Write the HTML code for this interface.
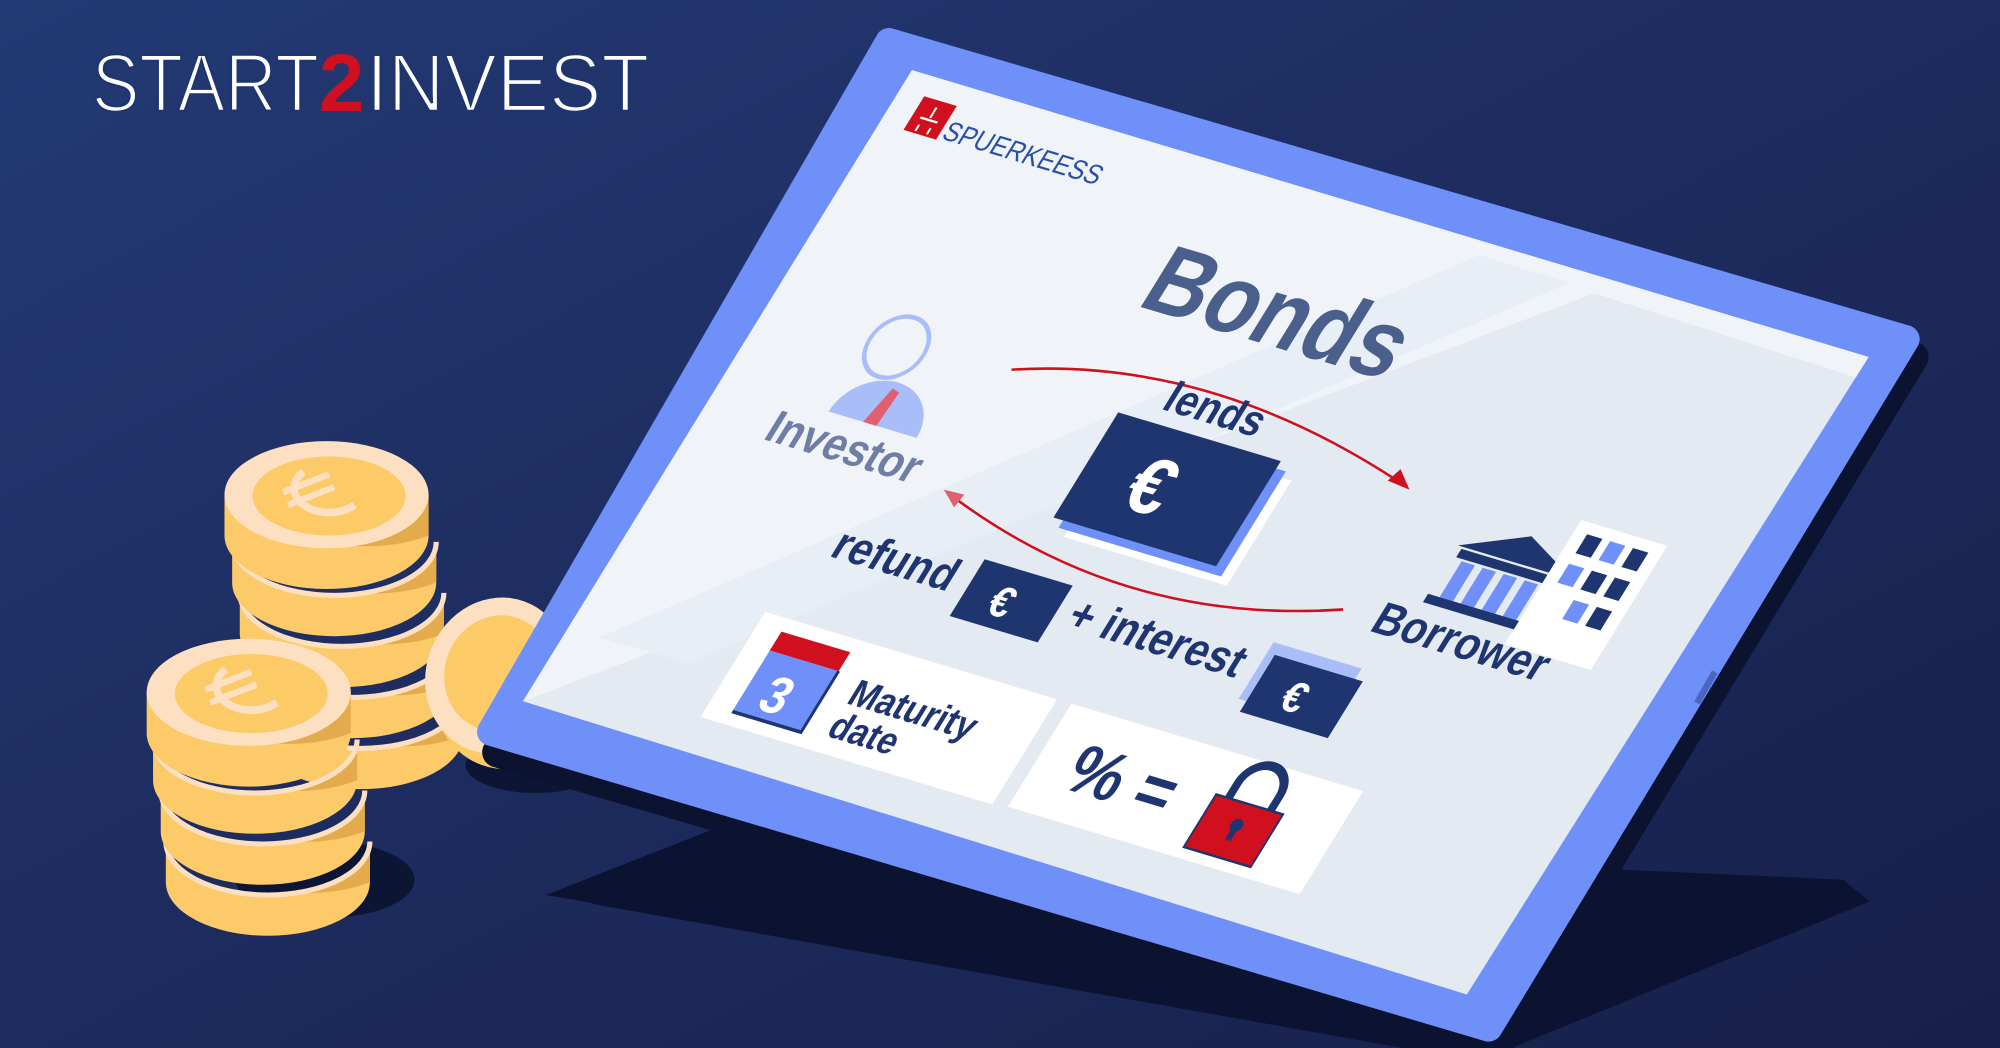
<!DOCTYPE html>
<html><head><meta charset="utf-8"><style>html,body{margin:0;padding:0;background:#1c2a5c;overflow:hidden}svg{display:block}</style></head>
<body>
<svg width="2000" height="1048" viewBox="0 0 1568 822" preserveAspectRatio="none" xmlns="http://www.w3.org/2000/svg">
<defs>
<linearGradient id="bg" x1="0" y1="0" x2="1" y2="1">
<stop offset="0" stop-color="#233a74"/><stop offset="0.5" stop-color="#1d2b5e"/><stop offset="1" stop-color="#17204a"/>
</linearGradient>
<g id="coin">
<path d="M-80 0 v32 a80 42 0 0 0 160 0 v-32z" fill="#fcca68"/>
<path d="M20 40 a80 42 0 0 0 60 -8 v-32 a80 42 0 0 1 -60 40z" fill="#e3ab4c"/>
<ellipse rx="80" ry="42" fill="#fde0c2"/>
<ellipse rx="60" ry="31" cx="2" cy="1" fill="#fccb68"/>
<path d="M-18 -18 a26 18 0 1 0 40 26" fill="none" stroke="#fde0c2" stroke-width="6"/>
<path d="M-34 -2 l36 -14 M-30 8 l36 -14" stroke="#fde0c2" stroke-width="5"/>
</g>
<g id="side">
<path d="M-80 0 v32 a80 42 0 0 0 160 0 v-32 a80 42 0 0 1 -160 0z" fill="#fcca68"/>
<path d="M20 40 a80 42 0 0 0 60 -8 v-32 a80 42 0 0 1 -60 40z" fill="#e3ab4c"/>
<path d="M-80 0 a80 42 0 0 0 160 0" fill="none" stroke="#fde0c2" stroke-width="4"/>
</g>
</defs>
<rect width="1568" height="822" fill="url(#bg)"/>

<text x="72" y="87" font-family="Liberation Sans, sans-serif" font-size="64" fill="#fff" textLength="178" lengthAdjust="spacingAndGlyphs" stroke="#1f3570" stroke-width="2">START</text>
<text x="250" y="87" font-family="Liberation Sans, sans-serif" font-size="64" font-weight="bold" fill="#d0101e">2</text>
<text x="287" y="87" font-family="Liberation Sans, sans-serif" font-size="64" fill="#fff" textLength="222" lengthAdjust="spacingAndGlyphs" stroke="#1f3570" stroke-width="2">INVEST</text>

<polygon points="428,702 560,650 1445,690 1466,707 1185,822 1140,822" fill="#0b1232"/>
<polygon points="430,700 1180,822 1100,822 470,710" fill="#0b1232"/>

<ellipse cx="255" cy="690" rx="70" ry="30" fill="#0d1535"/>
<ellipse cx="420" cy="600" rx="55" ry="22" fill="#0d1535"/>
<use href="#side" x="283" y="545"/>
<use href="#side" x="276" y="505"/>
<use href="#side" x="268" y="465"/>
<use href="#side" x="262" y="425"/>
<use href="#coin" x="256" y="388"/>
<g transform="translate(390,530) rotate(-70)">
<ellipse rx="62" ry="58" fill="#fcca68" cx="-8" cy="12"/>
<ellipse rx="62" ry="56" fill="#fde0c2"/>
<ellipse rx="46" ry="42" cx="2" fill="#fccb68"/>
</g>
<use href="#side" x="210" y="660"/>
<use href="#side" x="206" y="620"/>
<use href="#side" x="200" y="580"/>
<use href="#coin" x="195" y="543"/>

<polygon points="700,45 1500,280 1175,818 390,590" fill="#0b1330" stroke="#0b1330" stroke-width="24" stroke-linejoin="round"/>
<polygon points="697,33 1494,266 1167,806 385,574" fill="#6e90f8" stroke="#6e90f8" stroke-width="22" stroke-linejoin="round"/>
<rect x="1335" y="525" width="5" height="28" fill="#4b66c0" transform="rotate(30 1337 539)"/>
<polygon points="715,55 1465,280 1150,780 410,550" fill="#e4eaf2"/>
<polygon points="715,55 1465,280 1455,296 1250,230 410,550" fill="#f0f4f8"/>
<polygon points="1160,200 1230,222 540,520 470,500" fill="#e8eef5"/>

<path d="M793 290 Q950 280 1100 380" fill="none" stroke="#d0101e" stroke-width="2"/>
<polygon points="1105,384 1088,377 1098,368" fill="#d0101e"/>
<path d="M1053 478 Q880 490 745 388" fill="none" stroke="#d0101e" stroke-width="2"/>
<polygon points="740,384 756,388 748,398" fill="#e06070"/>

<g transform="matrix(0.75,0.225,-0.508,0.825,715,55)" font-family="Liberation Sans, sans-serif" font-weight="bold">
<rect x="25" y="18" width="34" height="32" fill="#d0101e"/>
<path d="M33 36 h18 M42 24 v10 M36 42 v6 M48 42 v6" stroke="#fff" stroke-width="2"/>
<text x="62" y="48" font-size="24" font-weight="normal" fill="#2a4fa8">SPUERKEESS</text>
<text x="325" y="135" font-size="84" fill="#4a5f8c">Bonds</text>
<circle cx="137" cy="226" r="28" fill="none" stroke="#a9bdf9" stroke-width="4"/>
<path d="M112 294 a46 40 0 0 1 92 0z" fill="#a9bdf9"/>
<polygon points="156,260 164,262 162,294 148,294" fill="#e06070"/>
<text x="68" y="332" font-size="40" fill="#6f7ea4">Investor</text>
<text x="403" y="212" font-size="38" fill="#1f3570">lends</text>
<rect x="388" y="238" width="170" height="100" fill="#fff"/>
<rect x="378" y="232" width="170" height="100" fill="#6e90f8"/>
<rect x="368" y="225" width="170" height="100" fill="#1f3570"/>
<text x="418" y="300" font-size="70" fill="#fff">€</text>
<text x="190" y="410" font-size="40" fill="#1f3570">refund</text>
<rect x="330" y="375" width="92" height="54" fill="#1f3570"/>
<text x="358" y="418" font-size="38" fill="#fff">€</text>
<text x="436" y="410" font-size="40" fill="#1f3570">+ interest</text>
<rect x="630" y="372" width="92" height="54" fill="#a9bdf9"/>
<rect x="638" y="382" width="92" height="54" fill="#1f3570"/>
<text x="668" y="424" font-size="38" fill="#fff">€</text>
<polygon points="740,250 800,225 860,250" fill="#1f3570"/>
<rect x="745" y="252" width="110" height="8" fill="#1f3570"/>
<rect x="752" y="262" width="14" height="34" fill="#6e90f8"/><rect x="774" y="262" width="14" height="34" fill="#6e90f8"/><rect x="796" y="262" width="14" height="34" fill="#6e90f8"/><rect x="818" y="262" width="14" height="34" fill="#6e90f8"/>
<rect x="740" y="296" width="120" height="8" fill="#1f3570"/>
<rect x="835" y="200" width="90" height="118" fill="#fff"/>
<g fill="#1f3570"><rect x="848" y="210" width="16" height="18"/><rect x="872" y="210" width="16" height="18" fill="#6e90f8"/><rect x="896" y="210" width="16" height="18"/><rect x="848" y="238" width="16" height="18" fill="#6e90f8"/><rect x="872" y="238" width="16" height="18"/><rect x="896" y="238" width="16" height="18"/><rect x="872" y="266" width="16" height="18" fill="#6e90f8"/><rect x="896" y="266" width="16" height="18"/></g>
<text x="707" y="340" font-size="40" fill="#1f3570">Borrower</text>
<rect x="165" y="470" width="305" height="100" fill="#fff"/>
<rect x="190" y="482" width="72" height="18" fill="#d0101e"/>
<rect x="190" y="500" width="72" height="58" fill="#6e90f8"/>
<path d="M190 558 h72 v-58" fill="none" stroke="#1f3570" stroke-width="3"/>
<text x="208" y="550" font-size="46" fill="#fff">3</text>
<text x="285" y="524" font-size="33" fill="#1f3570">Maturity</text>
<text x="285" y="555" font-size="33" fill="#1f3570">date</text>
<rect x="485" y="470" width="305" height="98" fill="#fff"/>
<text x="520" y="540" font-size="60" fill="#1f3570">% =</text>
<path d="M675 508 v-14 a22 22 0 0 1 44 0 v14" fill="none" stroke="#1f3570" stroke-width="8"/>
<rect x="662" y="508" width="70" height="50" fill="#d0101e" stroke="#1f3570" stroke-width="2"/>
<circle cx="697" cy="528" r="6" fill="#1f3570"/><rect x="694" y="528" width="6" height="14" fill="#1f3570"/>
</g>
</svg>
</body></html>
